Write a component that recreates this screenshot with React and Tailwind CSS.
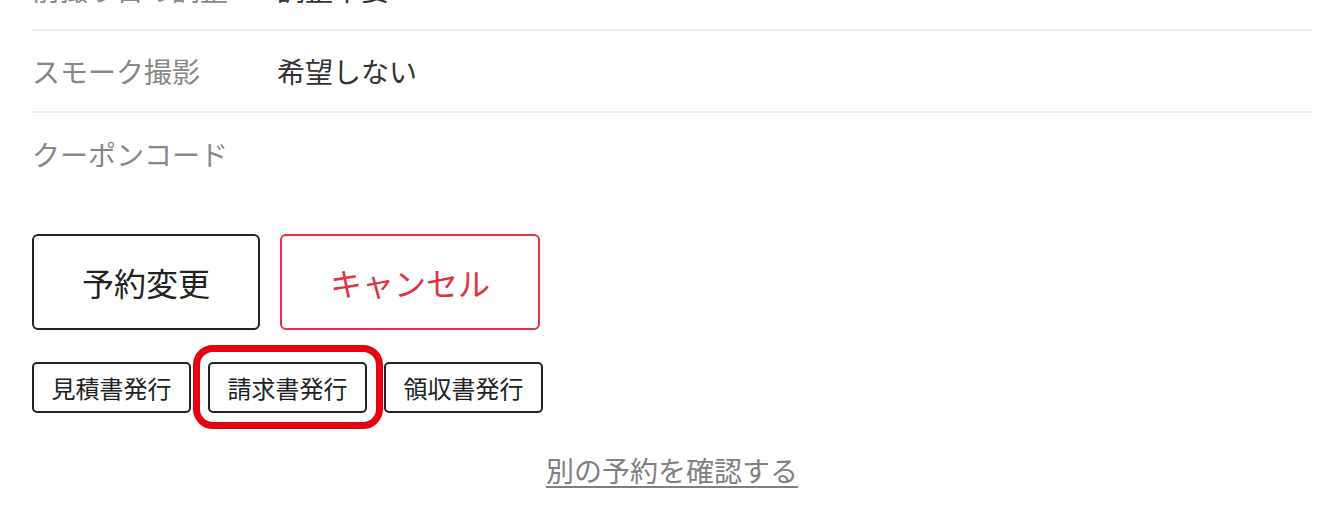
const jp = { fontFamily: '"Noto Sans CJK JP", "Noto Sans", sans-serif' };

const rows = [
  { label: '前撮り日の調整', value: '調整不要' },
  { label: 'スモーク撮影', value: '希望しない' },
  { label: 'クーポンコード', value: '' },
];

const docs = ['見積書発行', '請求書発行', '領収書発行'];

export default function App() {
  return (
    <div className="h-[520px] overflow-hidden bg-white px-8" style={jp}>
      {/* Detail rows */}
      <div className="-mt-[51px]">
        {rows.map((row, i) => (
          <div
            key={row.label}
            className={`flex h-[82px] items-center text-[28px] ${i < rows.length - 1 ? 'border-b-2 border-[#eeeeee]' : ''}`}
          >
            <span className="w-[245px] text-[#888888]">{row.label}</span>
            <span className="text-[#333333]">{row.value}</span>
          </div>
        ))}
      </div>

      {/* Main actions */}
      <div className="mt-[39px] flex gap-5">
        <button className="h-24 rounded-md border-2 border-[#222222] px-12 text-[32px] text-[#222222]">予約変更</button>
        <button className="h-24 rounded-md border-2 border-[#dc3545] px-12 text-[32px] text-[#dc3545]">キャンセル</button>
      </div>

      {/* Documents */}
      <div className="mt-8 flex gap-[17px]">
        {docs.map((d, i) => (
          <div key={d} className="relative">
            <button className="h-[51px] w-[159px] rounded-[5px] border-2 border-[#222222] text-[24px] text-[#222222]">{d}</button>
            {i === 1 && (
              <div className="pointer-events-none absolute -bottom-[16px] -left-[15px] -right-[16px] -top-[17px] rounded-[20px] border-[7px] border-[#e60012]" />
            )}
          </div>
        ))}
      </div>

      <div className="mt-[37px] text-center">
        <a href="#" className="text-[28px] leading-10 text-[#808080] underline decoration-2 underline-offset-[4px]">別の予約を確認する</a>
      </div>
    </div>
  );
}
